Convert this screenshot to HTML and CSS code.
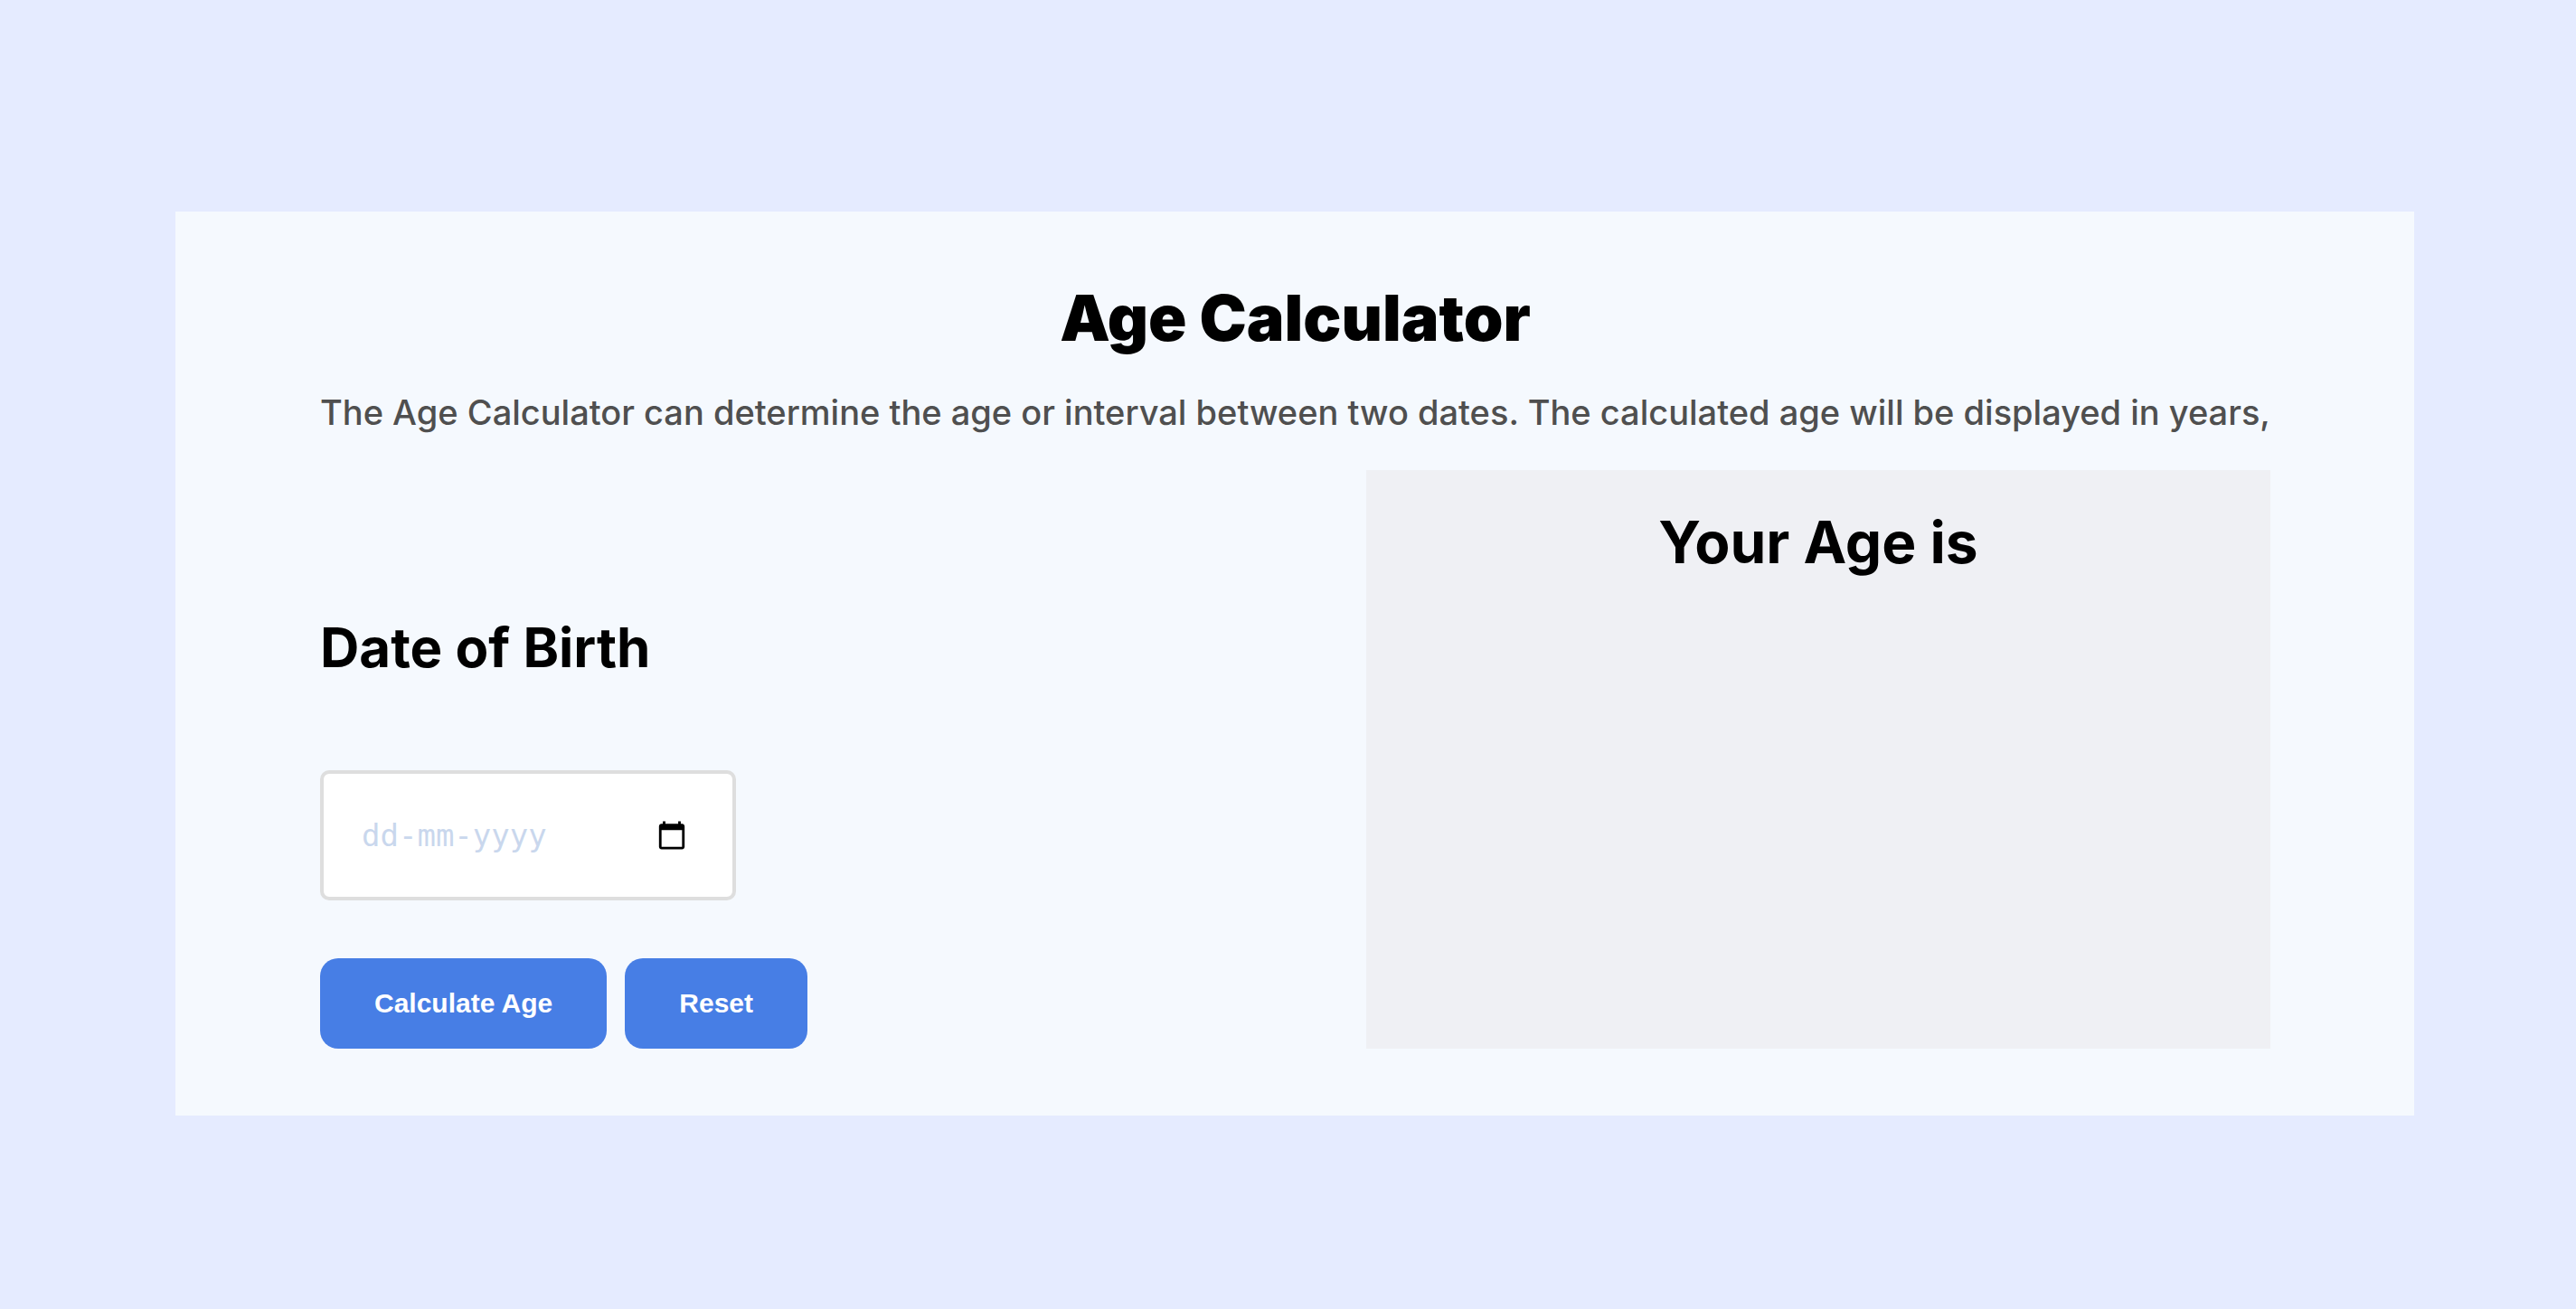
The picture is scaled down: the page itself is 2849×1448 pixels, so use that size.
FILE: index.html
```html
<!DOCTYPE html>
<html lang="en">
<head>
  <meta charset="utf-8">
  <meta name="viewport" content="width=device-width, initial-scale=1">
  <title>Age Calculator</title>
  <link rel="stylesheet" href="styles.css">
</head>
<body>
  <main class="card">
    <h1 class="title">Age Calculator</h1>
    <p class="intro">The Age Calculator can determine the age or interval between two dates. The calculated age will be displayed in years,</p>
    <div class="columns">
      <form class="form">
        <label class="form-label" for="dob">Date of Birth</label>
        <div class="date-field">
          <input class="date-input" id="dob" type="text" inputmode="numeric" placeholder="dd-mm-yyyy">
          <button class="date-picker" type="button" aria-label="Open calendar">
            <svg class="date-icon" viewBox="0 0 24 24" aria-hidden="true"><path d="M20 3h-1V1h-2v2H7V1H5v2H4c-1.1 0-2 .9-2 2v16c0 1.1.9 2 2 2h16c1.1 0 2-.9 2-2V5c0-1.1-.9-2-2-2zm0 18H4V8h16v13z"/></svg>
          </button>
        </div>
        <div class="actions">
          <button class="button" type="submit">Calculate Age</button>
          <button class="button" type="reset">Reset</button>
        </div>
      </form>
      <section class="result">
        <h2 class="result-title">Your Age is</h2>
      </section>
    </div>
  </main>
</body>
</html>
```
FILE: styles.css
```css
* {
  box-sizing: border-box;
  margin: 0;
}

body {
  display: flex;
  align-items: center;
  justify-content: center;
  min-height: 100vh;
  padding: 20px 0 0 15px;
  background: #e5ebff;
  color: #000;
  font-family: Inter, "Liberation Sans", sans-serif;
}

.card {
  display: flex;
  flex-direction: column;
  gap: 40px;
  width: 100%;
  max-width: 2476px;
  padding: 78px 159px 74px 160px;
  background: #f5f9fe;
}

.title {
  font-size: 70px;
  font-weight: 900;
  line-height: 80px;
  text-align: center;
}

.intro {
  color: #4f4f4f;
  font-size: 38px;
  font-weight: 500;
  line-height: 48px;
}

.columns {
  display: flex;
  justify-content: space-between;
  gap: 40px;
}

.form {
  display: flex;
  flex-direction: column;
  align-items: flex-start;
  justify-content: flex-end;
}

.form-label {
  margin-bottom: 100px;
  font-size: 60px;
  font-weight: 700;
  line-height: 72px;
}

.date-field {
  display: flex;
  align-items: center;
  width: 460px;
  height: 144px;
  margin-bottom: 64px;
  padding: 0 50px 0 42px;
  border: 4px solid #dedede;
  border-radius: 10px;
  background: #fff;
}

.date-input {
  flex: 1;
  min-width: 0;
  padding: 0;
  border: 0;
  outline: 0;
  background: none;
  color: #000;
  font-family: "DejaVu Sans Mono", monospace;
  font-size: 34px;
  line-height: 40px;
}

.date-input::placeholder {
  color: #c9d7ed;
  opacity: 1;
}

.date-picker {
  display: flex;
  padding: 0;
  border: 0;
  background: none;
  cursor: pointer;
}

.date-icon {
  width: 34px;
  height: 34px;
}

.actions {
  display: flex;
  gap: 20px;
}

.button {
  height: 100px;
  padding: 0 60px;
  border: 0;
  border-radius: 20px;
  background: #477ee5;
  color: #fff;
  font-family: "Liberation Sans", Arial, sans-serif;
  font-size: 30px;
  font-weight: 700;
  cursor: pointer;
}

.result {
  width: 1000px;
  min-height: 640px;
  padding: 40px;
  background: #eff0f4;
}

.result-title {
  font-size: 64px;
  font-weight: 700;
  line-height: 80px;
  text-align: center;
}
```
